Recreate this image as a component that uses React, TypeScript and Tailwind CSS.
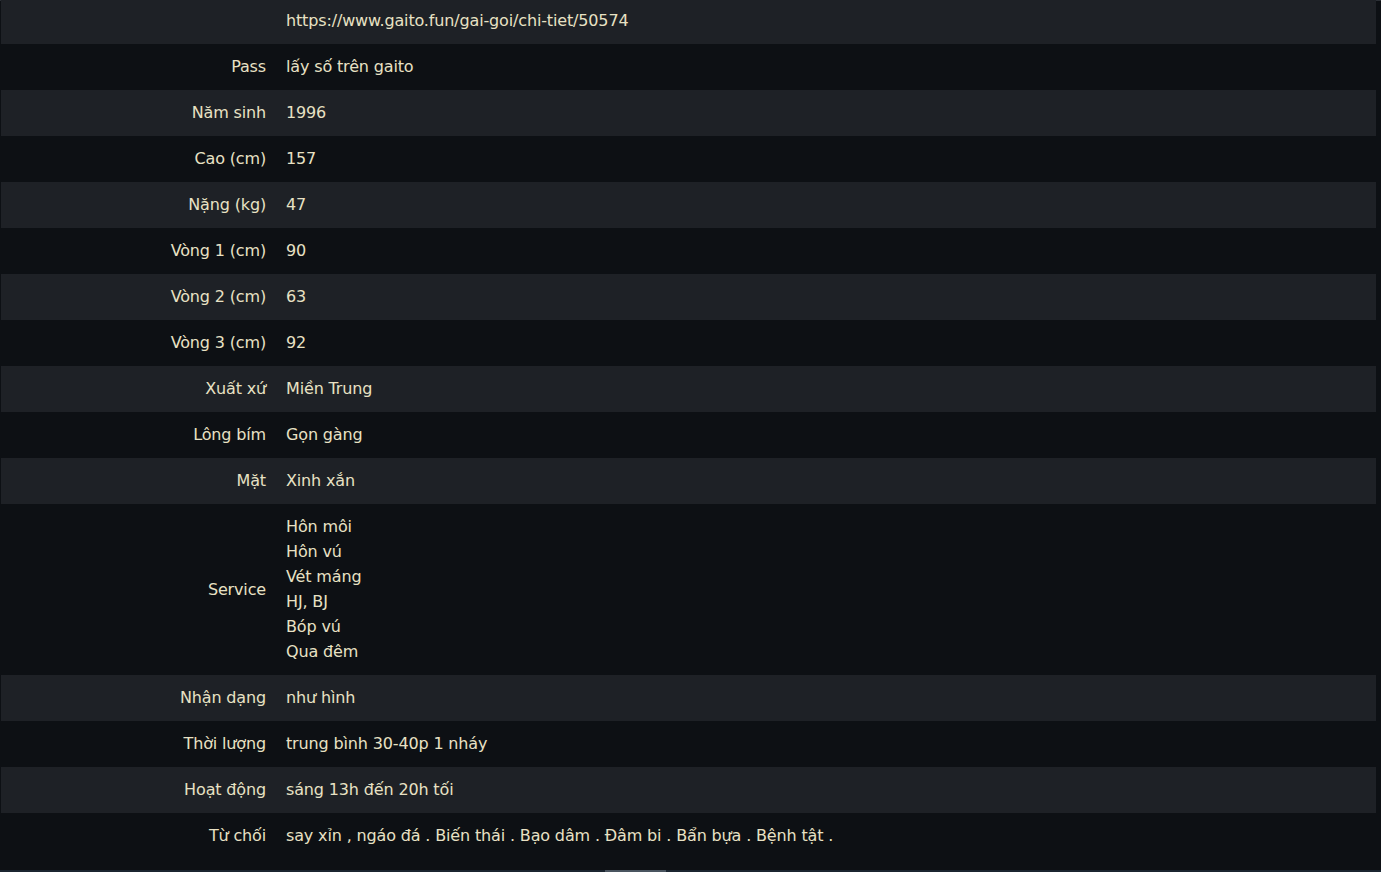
import React from "react";

const rows: [string, string | string[]][] = [
  ["", "https://www.gaito.fun/gai-goi/chi-tiet/50574"],
  ["Pass", "lấy số trên gaito"],
  ["Năm sinh", "1996"],
  ["Cao (cm)", "157"],
  ["Nặng (kg)", "47"],
  ["Vòng 1 (cm)", "90"],
  ["Vòng 2 (cm)", "63"],
  ["Vòng 3 (cm)", "92"],
  ["Xuất xứ", "Miền Trung"],
  ["Lông bím", "Gọn gàng"],
  ["Mặt", "Xinh xắn"],
  ["Service", ["Hôn môi", "Hôn vú", "Vét máng", "HJ, BJ", "Bóp vú", "Qua đêm"]],
  ["Nhận dạng", "như hình"],
  ["Thời lượng", "trung bình 30-40p 1 nháy"],
  ["Hoạt động", "sáng 13h đến 20h tối"],
  ["Từ chối", "say xỉn , ngáo đá . Biến thái . Bạo dâm . Đâm bi . Bẩn bựa . Bệnh tật ."],
];

export default function App() {
  return (
    <div
      className="w-[1381px] h-[872px] overflow-hidden bg-[#0d1014] text-[#e8e1c4] text-[16px] leading-[25px] relative tracking-[-0.15px]"
      style={{ fontFamily: '"DejaVu Sans", sans-serif' }}
    >
      <div className="h-px bg-[#2c3036]" />
      <div className="mt-[-3.5px] ml-px w-[1375px] flex flex-col">
        {rows.map(([label, value], i) => (
          <div
            key={i}
            className={`flex items-center ${i % 2 === 0 ? "bg-[#1e2126]" : "bg-[#0d1014]"}`}
          >
            <div className="w-[275px] shrink-0 pr-[10px] text-right py-[10.5px]">{label}</div>
            <div className="pl-[10px] py-[10.5px] flex flex-col">
              {Array.isArray(value) ? value.map((v) => <div key={v}>{v}</div>) : <div>{value}</div>}
            </div>
          </div>
        ))}
      </div>
      <div className="absolute left-0 right-0 bottom-0 h-[2px] bg-[#1b2530]">
        <div className="absolute left-[605px] w-[61px] top-0 h-[2px] bg-[#4a5560]" />
      </div>
    </div>
  );
}
